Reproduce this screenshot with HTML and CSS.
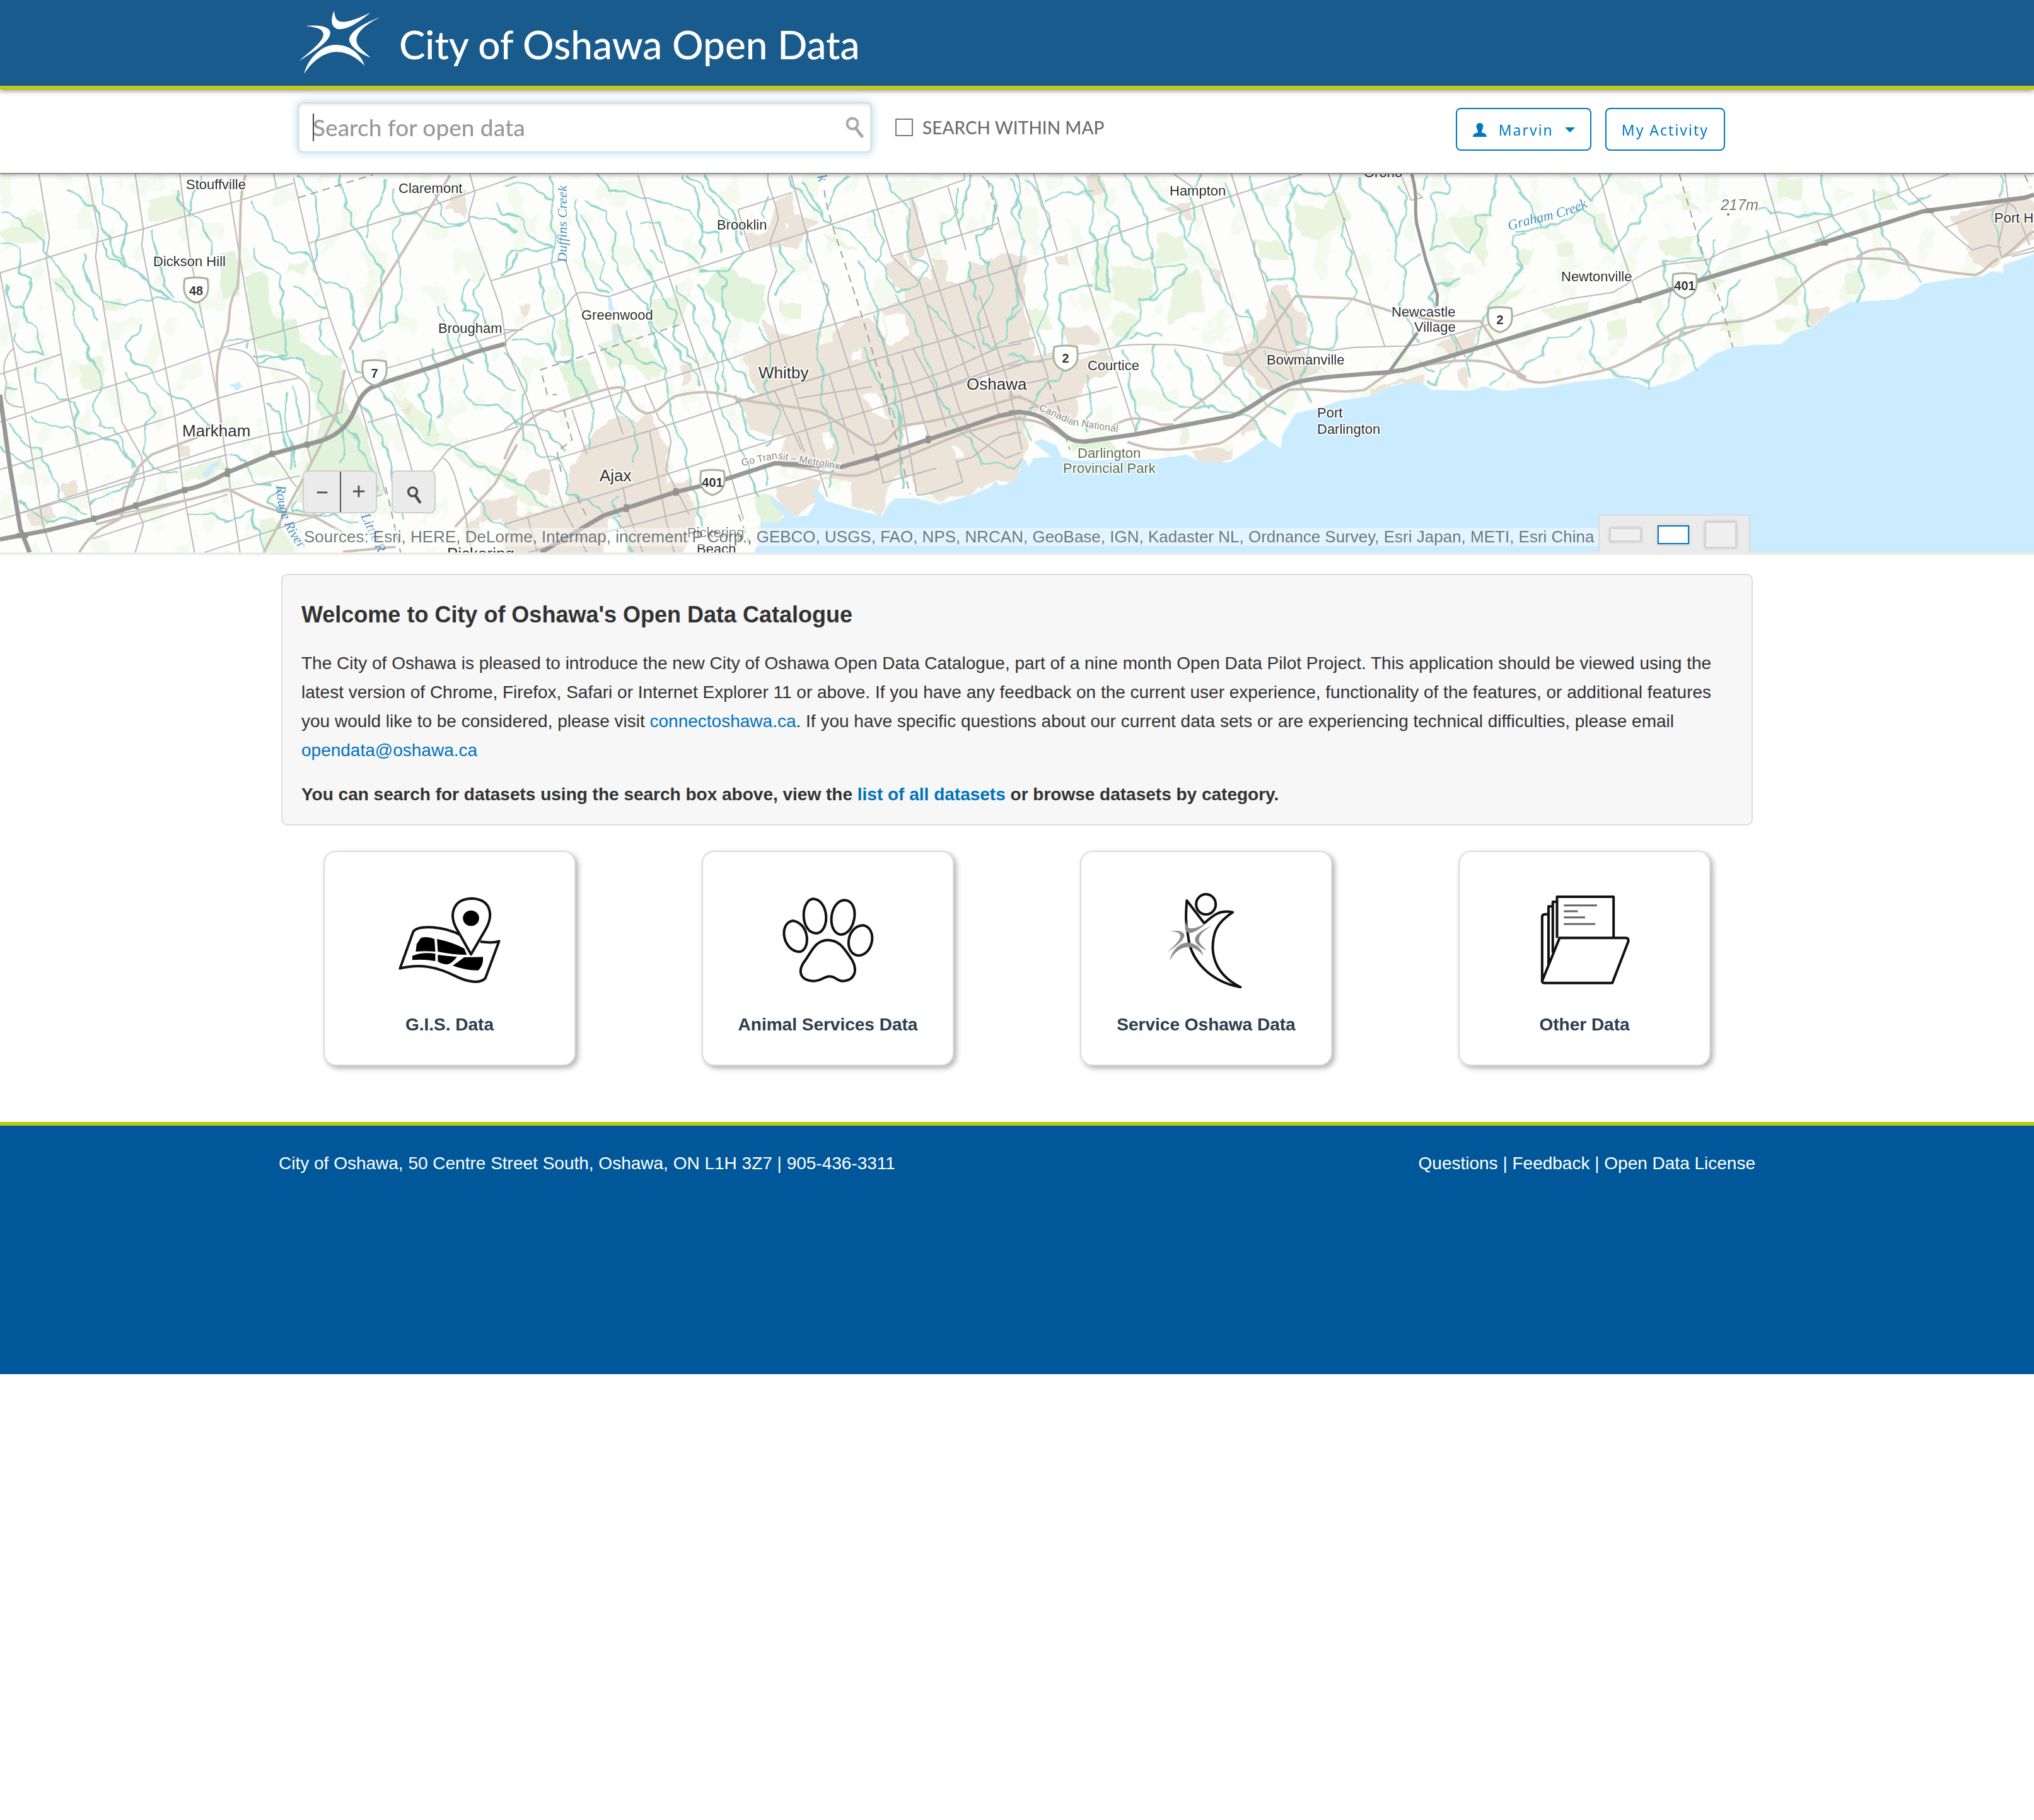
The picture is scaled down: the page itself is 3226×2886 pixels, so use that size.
FILE: index.html
```html
<!DOCTYPE html>
<html lang="en">
<head>
<meta charset="utf-8">
<title>City of Oshawa Open Data</title>
<meta name="viewport" content="width=device-width, initial-scale=1">
<link rel="stylesheet" href="styles.css">
</head>
<body>
<header class="banner">
  <div class="wrap banner-inner">
    <svg class="logo" viewBox="65 50 205 300" preserveAspectRatio="none" aria-hidden="true">
      <g id="star">
        <path d="M152 50C145 90 142 125 162 138C190 140 220 95 243 58C215 85 185 108 168 102C155 95 155 75 152 50Z"/>
        <path d="M82 122C110 118 142 120 143 155C142 200 100 245 65 290C95 240 125 200 126 160C122 130 105 130 82 122Z"/>
        <path d="M268 80C225 110 190 150 190 190C195 230 220 255 243 273C225 240 208 220 208 190C208 150 235 110 268 80Z"/>
        <path d="M78 350C85 290 115 215 155 212C195 212 220 260 228 312C210 275 185 245 158 246C120 250 95 300 78 350Z"/>
      </g>
    </svg>
    <h1 class="site-title">City of Oshawa Open Data</h1>
  </div>
</header>

<div class="toolbar">
  <form class="wrap toolbar-inner" role="search">
    <div class="search-box">
      <input class="search-input" type="text" placeholder="Search for open data" aria-label="Search for open data">
      <span class="caret-bar"></span>
      <button class="search-go" type="button" aria-label="Search">
        <svg viewBox="0 0 30 34" class="glass"><circle cx="11" cy="11" r="8.500"/><path d="M16 18L26 31"/></svg>
      </button>
    </div>
    <label class="within"><input type="checkbox" class="tick">SEARCH WITHIN MAP</label>
    <div class="account">
      <button class="btn" type="button">
        <svg class="person" viewBox="0 0 24 24" aria-hidden="true"><path d="M12 1C7 1 6 5 7 9C8 12 9 13 9 16C6 17 1 18 1 23H23C23 18 18 17 15 16C15 13 16 12 17 9C18 5 17 1 12 1Z"/></svg>
        Marvin
        <span class="down"></span>
      </button>
      <button class="btn" type="button">My Activity</button>
    </div>
  </form>
</div>

<section class="map" aria-label="Map">
  <svg class="map-art" viewBox="0 0 3226 600" preserveAspectRatio="xMidYMid slice">
    <defs>
      <filter id="wobble" x="0" y="0" width="100%" height="100%">
        <feTurbulence type="fractalNoise" baseFrequency="0.035" numOctaves="2" seed="4"/>
        <feDisplacementMap in="SourceGraphic" scale="18" xChannelSelector="R" yChannelSelector="G"/>
      </filter>
      <filter id="woods" x="0" y="0" width="100%" height="100%">
        <feTurbulence type="fractalNoise" baseFrequency="0.026 0.018" numOctaves="4" seed="11"/>
        <feColorMatrix values="0 0 0 0 0.902  0 0 0 0 0.957  0 0 0 0 0.855  14 0 0 0 -8.300"/>
      </filter>
      <filter id="edge" x="-5%" y="-5%" width="110%" height="110%">
        <feTurbulence type="fractalNoise" baseFrequency="0.05" numOctaves="2" seed="8"/>
        <feDisplacementMap in="SourceGraphic" scale="16" xChannelSelector="R" yChannelSelector="G"/>
      </filter>
      <path id="go-line" d="M1177 463L1232 451L1340 470"/>
      <path id="cn-line" d="M1647 374L1700 398L1790 412"/>
      <path id="graham-line" d="M2394 90C2440 72 2480 76 2536 42"/>
      <path id="rouge-line" d="M438 494C440 540 455 580 500 620"/>
      <path id="shield" d="M-18 -18Q0 -22 18 -18C22 4 17 15 0 20C-17 15 -22 4 -18 -18Z"/>
    </defs>
    <rect class="land" width="3226" height="600"/>
    <rect width="3226" height="600" filter="url(#woods)"/>

    <g filter="url(#edge)">
      <g class="area" transform="translate(0 -6) scale(.52296 .39541)">
        <path class="park" d="M665 340L715 315L730 500L675 515ZM740 425L800 400L830 600L895 605L910 690L985 745L1035 750L1045 870L1040 920L1100 1000L1165 1300L890 1340L975 1000L920 760L865 745L780 715L765 660Z"/>
        <path class="wood" d="M445 125L545 90L555 185L455 210ZM75 190L130 170L140 280L10 300L0 250L75 220ZM240 790L310 745L320 870L250 880ZM160 440L205 420L215 470L170 490ZM315 530L370 520L380 560L315 570ZM550 1200L670 1150L690 1200L600 1250L560 1240ZM790 1400L830 1390L900 1533L800 1533ZM1180 880L1290 980L1340 1060L1300 1120ZM1370 1120L1568 1230L1568 1260L1400 1170ZM880 370L930 370L920 420L875 400Z"/>
        <path class="town" d="M1365 110L1410 85L1420 190L1350 150ZM540 1110H578V1145H540ZM185 1255L235 1245V1305L195 1315ZM80 1380L150 1350L170 1400L100 1430ZM1465 1330L1568 1310V1400L1460 1410ZM1400 1440L1460 1380L1450 1480ZM1200 960L1260 945L1240 975Z"/>
        <path class="water" d="M610 1220L640 1180L670 1160L660 1190L620 1225ZM702 868L718 855L735 868L718 885Z"/>
      </g>
      <g class="area" transform="translate(800 -6) scale(.52296 .39541)">
        <path class="town" d="M725 740L800 690L780 600L830 640L870 660L965 640L955 700L990 690L1000 650L1050 590L1110 590L1160 700L1150 590L1140 540L1220 520L1200 490L1170 450L1150 370L1210 340L1240 420L1290 440L1300 360L1340 360L1345 450L1400 440L1410 370L1470 380L1500 330L1580 340V1180L1540 1250L1490 1245L1420 1300L1320 1320L1250 1300L1240 1230L1180 1230L1140 1385L1060 1350L1040 1240L960 1240L940 1330L880 1388L835 1340L830 1270L990 1230L1000 1190L830 1170L850 1060L800 1060L750 1040L715 930L770 900L740 830Z"/>
        <path class="town" d="M825 120L870 90L880 180L960 200L915 240L895 320L840 300L745 320L735 260L800 250ZM270 1050L310 1010L340 990L400 1000L450 970L470 1080L500 1120L490 1260L560 1240L570 1330L590 1400L540 1540H0V1400L190 1340L195 1220L230 1140ZM75 1210L150 1200L130 1300L60 1270ZM1230 110L1250 140L1280 330L1230 390L1215 260ZM540 790L570 770L560 850L540 860ZM50 530L75 530L70 590L52 590ZM330 620L360 625L345 690L325 680Z"/>
        <path class="land" d="M1090 900L1130 880L1160 1000L1120 980ZM1150 590L1220 570L1220 660L1170 700ZM1055 730L1085 720L1080 760L1058 755ZM1200 1040L1270 1010L1280 1080L1210 1110ZM960 1060L990 1050L1000 1110L975 1120ZM1360 1100L1380 1100L1390 1160L1370 1160ZM1440 830L1470 820L1480 860L1450 865ZM320 1400L350 1380L370 1540L300 1540ZM1020 1250L1050 1240L1045 1340L1010 1330ZM850 200L865 210L850 240Z"/>
        <path class="park" d="M600 470L640 400L690 390L740 450L795 470L790 560L770 620L720 590L660 560ZM170 780L250 755L285 880L200 915ZM760 1310L805 1300L850 1380L830 1410L778 1480Z"/>
        <path class="wood" d="M290 700L370 660L440 720L490 800L440 840L390 780L320 800ZM160 600L200 590L210 740L170 740ZM440 520L560 500L540 620L460 640ZM0 1200L60 1260L130 1350L60 1340L0 1270ZM960 250L1010 280L1080 330L1020 310ZM830 520L910 540L900 600L840 580Z"/>
        <path class="water" d="M318 515L330 520L332 580L320 560ZM322 655L342 650L338 695L326 690Z"/>
      </g>
      <g class="area" transform="translate(1600 -6) scale(.52296 .39541)">
        <path class="wood" d="M270 290L300 300L300 470L255 480ZM310 380L430 390L440 480L390 560L320 520ZM450 250L530 270L540 350L450 390ZM500 430L580 400L590 560L480 620ZM740 280L830 290L850 360L760 350ZM860 130L960 150L980 60L1040 180L940 280L870 250ZM1340 190L1450 170L1450 380L1350 260ZM340 560L400 600L360 690L300 640ZM60 560L110 560L130 650L60 640ZM1440 560L1480 490L1568 470L1480 560ZM520 1010L550 1010L545 1090L520 1090ZM1310 420L1370 440L1330 480Z"/>
        <path class="town" d="M0 620L60 610L80 740L140 740L210 760L290 720L320 800L230 850L200 1010L130 1000L60 960L0 980ZM165 640L230 625L280 650L270 700L180 700ZM750 600L780 580L790 470L840 455L870 560L900 590L915 690L870 710L930 770L960 800L800 880L760 870L720 800L650 780V740L740 690ZM550 1140L590 1110L680 1120L670 1172L580 1170ZM1100 880L1260 815V860L1210 850L1150 870L1100 905ZM1290 690L1420 640L1410 710L1330 740ZM230 20L270 15L300 90L250 110ZM460 150L560 120L555 200L520 180ZM610 390L640 400L650 480L625 450ZM140 350L180 340L180 380L150 375ZM0 1180L40 1170L0 1270ZM1360 800L1385 790L1390 870L1370 865ZM700 1030L740 1000L750 1040L710 1070Z"/>
        <path class="park" d="M185 1095L310 1075L325 1120L200 1130Z"/>
      </g>
      <g class="area" transform="translate(2406 -6) scale(.52296 .39541)">
        <path class="wood" d="M430 280L540 260L520 350L450 340ZM230 190L260 170L300 320L260 320ZM70 560L220 520L210 600L110 600ZM480 100L520 90L560 180L510 150ZM790 50L870 30L860 120L790 110ZM780 430L860 430L850 540L790 520ZM1000 420L1040 400L1040 500L1000 500ZM270 600L330 590L330 680L270 680ZM120 300L170 290L170 350L120 350ZM780 590L850 600L830 650L790 640ZM1080 90L1130 80L1150 160L1100 160ZM560 420L640 440L600 500ZM620 600L690 590L680 650L620 650ZM0 320L50 310L40 380L0 380Z"/>
        <path class="town" d="M1310 180L1490 115L1568 120V270L1470 360L1450 400L1400 380L1360 310L1380 320ZM885 560L940 545L950 570L890 630L875 600Z"/>
      </g>
    </g>

    <g class="water">
      <path transform="translate(800 -6) scale(.52296 .39541)" d="M755 1540L780 1470L778 1410L830 1412L850 1385L815 1340L805 1300L840 1340L880 1388L920 1385L945 1330L932 1262L965 1300L975 1325L1050 1355L1145 1388L1165 1340L1185 1315L1250 1315L1320 1340L1420 1300L1470 1275L1490 1245L1500 1265L1540 1255L1575 1180V1540Z"/>
      <path transform="translate(1600 -6) scale(.52296 .39541)" d="M0 1265L40 1200L30 1170L50 1160L60 1190L75 1155L130 1150L75 1090L100 1078L145 1105L160 1150L200 1165L440 1160L540 1140L580 1170L670 1172L720 1130L780 1075L825 1115L830 1060L870 975L935 955L1000 925L1100 905L1150 870L1210 850L1260 860L1280 880L1400 885L1440 865L1490 885L1568 880V1540H0Z"/>
      <path transform="translate(2406 -6) scale(.52296 .39541)" d="M0 875L80 872L170 850L320 830L360 850L400 872L490 840L550 790L600 735L660 710L720 700L800 698L840 655L890 635L950 570L1010 530L1150 517L1200 490L1230 455L1330 435L1410 425L1440 405L1475 412V380L1570 335V1540H0Z"/>
    </g>

    <g filter="url(#wobble)">
      <g class="stream" transform="translate(0 -6) scale(.52296 .39541)">
        <path d="M0 180L50 190L110 260L150 340L210 450L240 510L300 600M210 75L255 140L295 150L305 230L365 360L440 440L520 510L590 580L610 620M0 290L55 310L60 400L95 440L70 540L75 620L110 640L130 740L60 705L40 660"/>
        <path d="M295 20L320 130L360 170L390 250L370 320L380 390M165 450L220 520L230 620L265 710L270 750L320 860L280 940L300 1030L350 1040L400 1190M250 340L265 430L300 520M540 80L550 150L620 210L640 290L635 330M455 240L475 330L500 460L530 500M10 460L40 530L70 550M310 290L340 350L380 390"/>
        <path d="M610 20L580 100L575 190M760 120L800 180L830 270L880 330L930 340L950 370L990 460L1060 470L1080 560L1070 620L1100 680L1170 650M900 20L950 100L965 180L960 290L950 360M775 310L790 370L840 420L855 490L860 600L870 740L820 760L790 770M890 460L940 500L990 550M975 590L970 680L1030 750M1035 20L1050 150L1080 240L1110 320L1160 400L1150 560L1160 640L1200 610L1220 470L1210 330L1190 270L1210 190M1170 30L1160 120L1120 180L1110 280"/>
        <path d="M1190 80L1210 170L1270 170L1330 225L1400 225L1420 200L1500 200L1568 250M1310 70L1330 140L1350 200L1400 220M1510 120L1520 180L1568 205M1568 330L1550 390L1510 410M1420 440L1400 520L1410 570L1440 580L1430 640L1470 730L1480 800L1550 880L1568 890M1320 545L1350 640L1380 740L1440 770M1345 530L1370 570L1390 650L1410 740M1470 420L1440 470L1450 560L1490 640"/>
        <path d="M105 790L110 840L180 910L230 920L225 1030L280 1060L350 1100L410 1190M380 810L400 860L440 900L465 970L440 1020L440 1120L470 1200L540 1220M425 620L380 700L400 760L450 780L480 860L570 940L600 990L640 1030M90 990L130 1020L210 1030L240 1100M30 1010L60 1090L120 1120L150 1200L190 1320L260 1380M690 690L750 690L740 720M770 740L830 750L920 760L930 810L970 850L970 920L1010 990L1080 1070L1110 1160L1150 1280M870 890L860 1000L880 1100L900 1200M810 940L840 960L850 1050L880 1130L890 1210M885 870L900 940L920 1010M450 450L510 510L440 520L380 545L310 525"/>
        <path d="M1060 720L1080 800L1150 870L1190 950L1240 1020L1310 1110L1360 1100L1410 1140L1480 1210L1568 1240M1090 930L1150 1060L1180 1150L1200 1260L1230 1400M1270 760L1300 850L1270 900L1310 980L1300 1060M1310 720L1340 850L1330 1000M1400 770L1410 880L1430 940L1510 940L1568 1030M1020 980L1050 1080L1030 1180M570 1380L640 1370L690 1420L760 1360L780 1460L800 1533M700 1140L740 1160L770 1250L820 1255M0 1110L60 1160L100 1190M60 1320L140 1410L230 1400M840 1260L810 1330L850 1360L850 1420M900 1340L890 1370L1010 1390L1090 1420M1430 1280L1470 1380L1500 1410L1568 1430M270 1330L330 1290L400 1270L420 1200M20 880L55 875"/>
      </g>
      <g class="stream" transform="translate(800 -6) scale(.52296 .39541)">
        <path d="M145 20L145 250L155 430L185 540L190 660L215 760L210 830L250 890L270 960L260 1110M0 60L60 50L120 100L145 130M0 180L60 210L80 260L145 320M0 390L30 320L145 320M215 120L220 200L240 270L230 350L280 470L310 500M250 130L310 170L330 250L330 340L370 460L430 540L460 640L510 700L560 780L590 860M235 180L270 270L300 360L290 430L320 490"/>
        <path d="M280 20L310 80L370 90L430 120L500 130L570 170L600 240L650 250L660 340M365 160L390 250L410 350L460 480L510 560L520 680L560 740L590 770M410 210L470 210L490 300L540 330L590 380M540 20L580 100L600 200L600 360M555 20L600 60L640 150L700 230L720 340L680 390L590 400M610 20L640 100L690 160L720 250M640 390L665 440L660 560L680 610L660 700L700 790L760 890M515 460L570 540L600 660L640 770L650 900L660 1000L700 1060L740 1200L770 1310M590 460L620 540L640 620L660 680L665 820L670 880M805 100L780 180L790 200M830 290L870 400L820 500M440 320L480 370M860 20L880 70L930 140L965 190M910 240L920 320L930 370"/>
        <path d="M900 50L930 100L970 200L1060 260L1130 370L1150 330L1110 150M1040 20L970 150M1160 20L1180 90L1230 160L1220 310L1280 380L1250 470L1190 490L1150 400L1140 340M1380 70L1370 170L1330 210L1340 300M1415 20L1390 180L1380 230M1450 20L1490 100L1480 230L1430 260L1440 340L1470 370L1480 490L1440 560L1450 700L1480 720L1520 680L1530 600L1568 540M1410 360L1420 450L1430 520M1080 370L1100 460L1130 540L1130 620L1160 720L1180 850L1200 1010L1200 1170L1210 1280M1180 500L1240 600L1270 720L1300 840L1330 950L1360 1000L1420 1100L1440 1170L1540 1190L1568 1150M970 440L990 480L970 560L960 640L950 710L970 830L960 920L990 1010L1010 1150L980 1280M770 620L800 690L800 780L790 880L830 960L820 1060L790 1120M1090 700L1120 800L1160 920L1190 1000"/>
        <path d="M105 400L110 490L130 550L150 600L145 700L160 760L210 760M0 730L40 790L70 880L50 980L60 1080L110 1140L180 1170L190 1300L250 1320L300 1370M30 680L130 690L150 740M285 710L350 760L360 880L340 950L400 1030L410 1100L390 1170M340 620L370 700L430 780L490 800L500 960L520 1030L550 1110L550 1190L570 1260L590 1360L600 1430M450 470L440 600L460 720L490 800M0 970L30 1010L80 1030L140 1050L185 1130M0 1230L60 1260L90 1330L140 1350M700 900L720 960L750 1060L790 1080M355 1300L330 1330L350 1390L330 1400L370 1450L385 1533M1290 540L1330 600L1380 680L1430 720M1530 40L1560 100L1568 200M790 1180L790 1260"/>
      </g>
      <g class="stream" transform="translate(1600 -6) scale(.52296 .39541)">
        <path d="M20 20L40 80L10 160L50 280L20 400L30 470L0 600M50 40L100 140L130 210L100 290L120 380L110 560L90 640L110 740M115 130L160 90L250 90M195 20L230 80L250 140L255 270L275 320L260 470L300 480L300 280L330 200L300 140L280 20M345 20L380 90L410 170L420 260L440 350L380 340L340 280L330 210M440 400L530 380L540 400L440 520L400 520L400 600L330 700M430 330L450 470L430 520M0 740L40 740L60 770L100 760"/>
        <path d="M410 20L440 80L520 160L530 260L570 320L620 420L650 500L680 560L730 600L740 680M590 20L550 80L570 200L540 260M730 20L760 120L800 240L860 340L870 440L780 430M655 50L690 150M850 20L860 80L840 150L860 220L860 300L870 480L900 560L920 640L910 700M850 100L880 70L960 110L1000 70L1010 20M735 280L750 340L780 440M800 480L830 570L860 640L870 700L990 710L1000 600L1040 520L1050 480L1030 420L1040 340L1000 260L1010 190M1060 20L1080 90L1140 150L1170 240L1180 350L1200 440L1190 530L1220 640L1240 690M1190 60L1210 150L1170 290"/>
        <path d="M1265 20L1255 80M1330 20L1330 80L1290 100L1290 200L1275 320L1350 290L1400 330L1430 240L1420 185H1465L1480 20M1190 390L1250 340M1370 430L1290 460L1270 510L1300 560M1520 20L1560 120M1568 250L1530 260L1530 300L1560 390L1500 490L1460 540L1440 590L1420 700L1390 760L1400 840M160 490L250 460M160 490L155 600L170 730L160 830L80 890L70 960L40 1010L60 1080M235 820L245 900L240 1050M345 720L370 860L390 1000L385 1040M440 700L430 800L470 900L510 950L600 945L650 975L730 990L780 1075M500 720L550 800L560 890L610 960M600 740L640 830L720 950M690 740L720 830L780 930L840 980M780 720L800 800L850 850M720 560L760 700M910 720L880 860L920 930M1340 660L1360 740L1310 800L1300 870L1270 860M1500 810L1450 860M360 680L400 650L460 660M1250 760L1290 810"/>
      </g>
      <g class="stream" transform="translate(2406 -6) scale(.52296 .39541)">
        <path d="M0 90L50 160L70 240L0 240M70 240L140 200L200 160L240 190L260 290L290 325L340 240L380 200L390 110L440 60V15M175 20L190 70L220 110L240 90L290 20M0 370L20 400L0 430M585 195L550 260L555 340L440 370L450 470L465 480L430 640L455 690L445 770L400 840V870M605 280L580 390L520 500L500 580L510 630L490 690L530 740L545 795M720 160L750 145L780 175L870 180L945 170L930 90L920 20M685 440L640 490L630 550L560 620L500 660M755 240L780 330L850 390L870 480L880 570L890 635M945 170L990 240L1030 280L1040 360L1050 460L1030 525M990 240L930 260L900 290M1080 70L1090 160L1110 270L1160 350L1200 400L1230 455M1135 20L1160 90L1190 140L1250 100M1465 20L1480 60L1460 110M1445 160L1455 290M200 620L160 670L90 675L80 740L0 810M220 600L235 650L220 720L230 770L290 800L310 820L400 840"/>
      </g>
    </g>

    <g class="road" transform="translate(0 -6) scale(.52296 .39541)">
      <path d="M0 412L140 352L290 290L435 235L560 185L735 118L890 52M0 818L185 738M0 1010L210 918L490 800L680 710L1000 590M0 1200L240 1105L530 985L660 915L820 855L910 832M0 1400L440 1230L690 1140M60 1375L440 1210L680 1105L830 1055C900 1050 940 1010 1035 970C1045 930 1035 880 1075 840L1170 795L1568 640M690 715C750 720 760 740 780 785C850 800 920 810 935 880C945 960 935 1000 930 1100L945 1170"/>
      <path d="M118 15L150 270L140 350L205 900L240 1105L280 1400M265 15L298 240L290 350L370 1010L430 1150L438 1240L412 1345L435 1420L410 1533M410 15L435 240L430 300L530 985L555 1280L590 1533M545 15L575 330L660 915L690 1200L728 1533M690 40L725 330L785 800L825 1138M890 30L935 290L1000 590L1090 930L1170 1300M935 293L1270 160L1568 25M1425 15L1440 90C1430 150 1415 180 1425 210L1520 560L1535 695M1490 443L1568 412M1115 1012L1200 978L1250 1205M1568 1030C1450 1080 1390 1090 1360 1120L1300 1220M1345 1155C1380 1180 1390 1290 1410 1370L1430 1533M0 410L75 960L130 1420L158 1533M40 715C10 750 5 800 20 850L15 900C15 940 40 950 70 950M150 1440L690 1285L910 1225M620 1533L1160 1300M280 1478L690 1300M830 15L838 70M825 1138C860 1180 870 1230 900 1270"/>
      <path class="rail" d="M745 20C720 100 735 300 720 470C690 540 700 560 690 650C640 780 660 900 670 1000V1050M1365 20L1150 480L1060 720M1045 800L1020 980L950 1160L800 1533M240 1533C300 1400 370 1420 370 1380C390 1200 430 1180 460 1140L600 1070M290 1420L690 1280C740 1300 780 1370 940 1385C980 1400 1000 1430 1040 1450M1568 1100L1500 1260L1380 1430M1040 1530L1200 1510"/>
      <path class="dash" d="M905 110L1130 18M1170 1270L1215 1533"/>
      <path class="hwy" d="M0 900L30 1190L62 1440L90 1533M0 1480L60 1465L140 1445L285 1398L412 1345L560 1282C620 1265 650 1240 690 1212L825 1138L930 1100C1000 1080 1040 1050 1065 990C1085 940 1090 900 1125 872L1180 845L1345 775L1440 730L1535 695"/>
      <path class="hwy-node" d="M50 1465H85M285 1385V1410M412 1332V1358M560 1270V1295M690 1195V1230M825 1125V1150M932 1088V1112"/>
    </g>
    <g class="road" transform="translate(800 -6) scale(.52296 .39541)">
      <path d="M0 42L30 25M0 428L185 355M0 640L55 640M0 695C60 600 120 600 170 570C200 540 200 500 230 490C270 485 290 510 320 505C400 470 480 430 600 385L820 290L1240 110L1395 38V15M0 1040C60 980 80 960 130 960L160 970L420 865L700 750L830 685L1120 570L1360 465L1568 380M135 1165L440 1045L820 885L1120 760L1360 670L1470 625M0 1420L360 1275L820 1080L1140 950L1568 780M70 1533L700 1315L1000 1205M890 915L1000 890L1115 868M1140 880L1240 850L1350 800L1500 710L1568 695M1175 345L1500 212M708 158L870 90M1145 1255L1310 1195M1140 950L1330 870L1568 760M700 930L880 860L980 820M1370 1170L1420 1150L1500 1070L1568 1050M1400 1040L1520 1155L1568 1130M1250 1300C1270 1310 1350 1270 1390 1250L1370 1160"/>
      <path d="M405 20L500 430L585 770L660 1100L725 1400M185 360L220 500L275 720L325 920L360 1060M0 700L65 900L140 1180L180 1360L250 1533M870 20L915 250L1000 600L1060 850L1130 1140L1150 1255M800 15C790 60 830 130 830 200L805 290L825 400C820 440 795 480 800 530L860 800L930 1110L980 1310M1100 20L1175 345L1260 450L1330 750L1380 960L1420 1060M1235 110L1300 400L1380 720L1420 880M1345 65L1400 320M708 158L745 320M1500 215L1568 520M1380 460L1470 830L1500 980M1120 580L1200 900L1250 1290M205 960L250 1140M425 865L470 1000C490 1020 500 1040 505 1090L490 1200L560 1380M440 1045L490 1400L515 1533M1205 740L1290 1080M1240 715L1300 860L1340 1030M1440 500L1540 900M890 1060L910 1130M985 820L1060 1140M360 1270L370 1350L420 1533M70 1390L100 1533M820 885L900 1120"/>
      <path class="rail" d="M0 1160C30 1050 60 1000 130 960C200 930 300 870 350 870C390 880 370 950 430 975C480 970 480 930 520 905C600 880 640 885 720 920C800 940 900 950 960 970C1000 1000 1050 1050 1110 1100C1180 1110 1170 1020 1230 1020C1350 1000 1450 950 1568 905M840 1185C940 1190 980 1225 1060 1225C1120 1220 1150 1180 1400 1050L1568 990"/>
      <path class="dash" d="M970 80C980 200 1050 420 1110 700L1140 830L1190 1080L1230 1300M1465 40L1500 210M530 620L110 800L130 900H160M180 960L205 1080L160 1130L175 1230M220 1310L250 1390M710 1380L745 1500"/>
      <path class="hwy" d="M110 1533L300 1385L370 1355L520 1290L640 1252L820 1175L1020 1190L1130 1150L1285 1080L1400 1030L1500 985L1568 968"/>
      <path class="hwy-node" d="M370 1340V1370M520 1275V1305M1130 1138V1165M1285 1065V1095"/>
    </g>
    <g class="road" transform="translate(1600 -6) scale(.52296 .39541)">
      <path d="M0 392L205 308L585 140L890 15M75 15L148 325M0 340L120 835M205 308L385 1050M585 140L720 720C740 800 780 810 800 880M675 15L870 860M970 15L1140 705M500 15L560 70M0 695L80 670M0 785L215 735L310 715C330 700 400 695 500 700C600 710 640 745 700 740C740 720 760 705 780 710L850 730L910 710L980 722L1050 710L1200 705L1240 700L1450 620L1568 570M60 955L170 920L330 868M0 870L120 835M1350 660L1385 750M0 870L40 1120M0 1060L20 1050M1190 20L1220 120L1255 110L1240 90"/>
      <path class="rail" d="M500 1005L620 890L770 690L870 505L1040 515L1170 570L1300 605H1430L1530 800L1568 830M0 905C60 910 80 940 120 980M300 1040C350 990 390 980 460 1020H500M360 1090C450 1130 480 1130 640 1095C700 1060 760 960 850 880C950 870 1000 900 1080 880L1150 815C1250 780 1400 740 1480 780L1568 835M0 1000C80 990 120 1020 180 1080"/>
      <path class="dash" d="M120 850L155 970M170 1060L185 1120"/>
      <path class="hwy" d="M0 972L30 970C100 975 120 1010 150 1040C180 1080 200 1088 230 1088L380 1060L680 985C760 940 770 900 860 855C920 830 1000 825 1150 810L1200 800L1568 655"/>
      <path class="hwy thin" d="M1222 15C1245 120 1225 160 1240 230L1265 360L1300 500L1298 545M1240 650L1150 815"/>
    </g>
    <g class="road" transform="translate(2406 -6) scale(.52296 .39541)">
      <path d="M0 580L160 515L290 490C360 440 390 400 450 378L580 358C620 330 630 320 660 310L910 205L1170 85L1310 15M250 15L300 260L345 430L368 520M750 15L800 245M1170 15L1190 80L1300 230L1380 320L1430 300L1470 310M910 200L935 290M1480 15L1490 120L1460 300L1470 350L1568 310M1300 230L1490 130L1510 150L1555 300M1500 345L1568 325"/>
      <path class="rail" d="M0 825C60 870 100 850 200 820C350 790 400 700 500 635C600 610 680 610 700 600C800 560 830 490 900 420C980 350 1020 350 1100 355C1200 380 1280 410 1390 420C1430 400 1430 370 1460 355M1030 350C1060 320 1100 310 1140 318C1170 330 1180 360 1190 380M380 730L540 640M1470 350C1520 310 1540 260 1568 245"/>
      <path class="dash" d="M492 15L560 320L620 540L655 712M1540 20L1558 70"/>
      <path class="hwy" d="M0 665L370 520L550 443L930 290L1230 165L1300 152L1540 110L1568 98"/>
      <path class="hwy-node" d="M358 522H378M922 292H943M1242 162H1263"/>
    </g>

    <g class="shields">
      <use href="#shield" x="311" y="184"/><use href="#shield" x="594" y="315"/><use href="#shield" x="1130" y="489"/><use href="#shield" x="1690" y="292"/><use href="#shield" x="2379" y="231"/><use href="#shield" x="2672" y="177"/>
      <text x="311" y="192">48</text><text x="594" y="323">7</text><text x="1130" y="496">401</text><text x="1690" y="299">2</text><text x="2379" y="238">2</text><text x="2672" y="184">401</text>
    </g>
    <g class="place">
      <text x="295" y="24">Stouffville</text><text x="632" y="30">Claremont</text><text x="243" y="146">Dickson Hill</text><text x="695" y="252">Brougham</text>
      <text x="1137" y="88">Brooklin</text><text x="922" y="231">Greenwood</text><text x="1855" y="34">Hampton</text><text x="2163" y="5">Orono</text>
      <text x="1725" y="311">Courtice</text><text x="2009" y="302">Bowmanville</text><text x="2207" y="226">Newcastle</text><text x="2243" y="250">Village</text>
      <text x="2089" y="386">Port</text><text x="2089" y="412">Darlington</text><text x="2476" y="170">Newtonville</text><text x="3163" y="77">Port Hope</text>
      <text x="1090" y="576">Pickering</text><text x="1105" y="602">Beach</text>
    </g>
    <g class="place city">
      <text x="289" y="416">Markham</text><text x="1203" y="324">Whitby</text><text x="1533" y="342">Oshawa</text><text x="951" y="487">Ajax</text><text x="709" y="611">Pickering</text>
    </g>
    <g class="place park-name"><text x="1709" y="450">Darlington</text><text x="1686" y="474">Provincial Park</text></g>
    <g class="creek">
      <text transform="translate(899 140) rotate(-90)">Duffins Creek</text>
      <text><textPath href="#graham-line">Graham Creek</textPath></text>
      <text><textPath href="#rouge-line">Rouge River</textPath></text>
      <text transform="translate(572 542) rotate(65)">Little R</text>
      <text transform="translate(1296 4) rotate(70)">k</text>
    </g>
    <g class="line-name">
      <text><textPath href="#go-line">Go Transit – Metrolinx</textPath></text>
      <text><textPath href="#cn-line">Canadian National</textPath></text>
    </g>
    <text class="height" x="2729" y="57">217m</text><circle cx="2741" cy="64" r="2" fill="#777"/>
  </svg>

  <div class="wrap map-ui">
    <div class="map-buttons">
      <div class="zoom">
        <button type="button" aria-label="Zoom out"><svg viewBox="0 0 24 24"><path d="M3 13H21"/></svg></button>
        <button type="button" aria-label="Zoom in"><svg viewBox="0 0 24 24"><path d="M2 11H22M12 1V21"/></svg></button>
      </div>
      <button class="locate" type="button" aria-label="Find a place"><svg viewBox="0 0 30 34" class="glass dark"><circle cx="11" cy="11" r="8"/><path d="M16 18L24 30"/></svg></button>
    </div>
    <div class="credit-row">
      <p class="credit">Sources: Esri, HERE, DeLorme, Intermap, increment P Corp., GEBCO, USGS, FAO, NPS, NRCAN, GeoBase, IGN, Kadaster NL, Ordnance Survey, Esri Japan, METI, Esri China (Hong Kong), swisstopo</p>
      <div class="sizes">
        <button class="size small" type="button" aria-label="Small map"></button>
        <button class="size medium" type="button" aria-label="Medium map"></button>
        <button class="size large" type="button" aria-label="Large map"></button>
      </div>
    </div>
  </div>
</section>

<main>
  <section class="wrap welcome">
    <h2>Welcome to City of Oshawa's Open Data Catalogue</h2>
    <p>The City of Oshawa is pleased to introduce the new City of Oshawa Open Data Catalogue, part of a nine month Open Data Pilot Project. This application should be viewed using the latest version of Chrome, Firefox, Safari or Internet Explorer 11 or above. If you have any feedback on the current user experience, functionality of the features, or additional features you would like to be considered, please visit <a href="#connect">connectoshawa.ca</a>. If you have specific questions about our current data sets or are experiencing technical difficulties, please email <a href="#email">opendata@oshawa.ca</a></p>
    <p class="strong">You can search for datasets using the search box above, view the <a href="#datasets">list of all datasets</a> or browse datasets by category.</p>
  </section>

  <nav class="cards" aria-label="Categories">
    <a class="card" href="#gis">
      <svg class="pic" viewBox="197 250 261 480" preserveAspectRatio="none" aria-hidden="true">
        <path class="ink" d="M352 455C315 415 255 405 242 440L211 615C260 590 300 610 340 650C370 680 400 690 412 660L444 485C435 492 420 493 400 488"/>
        <path class="ink" d="M378 548L345 430C325 360 335 285 379 282C425 285 432 360 412 430Z"/>
        <ellipse cx="378" cy="376" rx="19" ry="37"/>
        <path d="M260 470Q275 460 292 475L294 535Q270 530 248 535L250 500ZM298 475Q335 490 362 520L368 550Q335 550 300 535ZM240 555Q265 535 294 545V580Q265 570 240 575ZM300 550Q320 555 345 560Q330 600 318 595Q305 590 300 582ZM362 562L406 560Q408 600 395 624Q365 625 335 602Z"/>
      </svg>
      <span>G.I.S. Data</span>
    </a>
    <a class="card" href="#animals">
      <svg class="pic" viewBox="1084 250 261 480" preserveAspectRatio="none" aria-hidden="true">
        <path class="ink" d="M1180 284C1150 290 1148 445 1188 448C1220 440 1218 290 1180 284ZM1254 290C1216 295 1212 450 1246 454C1280 450 1292 295 1254 290ZM1132 388C1098 400 1108 530 1147 536C1175 530 1172 400 1132 388ZM1297 410C1256 415 1252 550 1287 554C1322 550 1332 420 1297 410ZM1214 480C1185 480 1175 540 1160 580C1145 620 1145 670 1180 675C1200 675 1205 652 1220 653C1235 655 1235 675 1250 675C1280 670 1285 620 1270 570C1255 530 1245 480 1214 480Z"/>
      </svg>
      <span>Animal Services Data</span>
    </a>
    <a class="card" href="#service">
      <svg class="pic" viewBox="197 250 261 480" preserveAspectRatio="none" aria-hidden="true">
        <ellipse class="ink" cx="327" cy="310" rx="23" ry="48"/>
        <path class="ink" d="M282 292L323 400C345 360 360 335 390 348C350 400 343 450 343 520C345 600 365 660 408 704C340 680 290 580 285 460C278 400 280 350 282 292Z"/>
        <use href="#star" fill="#8c8c8c" transform="translate(200 361) scale(.532 .62)"/>
      </svg>
      <span>Service Oshawa Data</span>
    </a>
    <a class="card" href="#other">
      <svg class="pic" viewBox="1084 250 261 480" preserveAspectRatio="none" aria-hidden="true">
        <path class="ink" d="M1150 470V274H1283V465M1150 298H1140V540M1140 320H1130V600M1130 357H1122Q1115 358 1115 370V680M1156 470H1312Q1318 470 1318 485L1280 684H1120Q1114 685 1116 670Z"/>
        <path class="ink gray" d="M1166 315H1244M1166 343H1199M1166 372H1216M1166 404H1240"/>
      </svg>
      <span>Other Data</span>
    </a>
  </nav>
</main>

<footer class="foot">
  <div class="foot-inner">
    <p>City of Oshawa, 50 Centre Street South, Oshawa, ON L1H 3Z7 | 905-436-3311</p>
    <p><a href="#questions">Questions</a> | <a href="#feedback">Feedback</a> | <a href="#license">Open Data License</a></p>
  </div>
</footer>
</body>
</html>
```

FILE: styles.css
```css
* { box-sizing: border-box; }

body {
  margin: 0;
  background: #fff;
  color: #323232;
  font: 28px/46px "Liberation Sans", Arial, sans-serif;
}

h1, h2, p { margin: 0; }
a { color: #0072bc; text-decoration: none; }
button { font: inherit; cursor: pointer; padding: 0; }

.wrap {
  width: 100%;
  max-width: 2334px;
  margin: 0 auto;
}

/* banner */
.banner {
  background: #1a5b8e;
  border-bottom: 6px solid #bfc912;
  position: relative;
  z-index: 3;
  box-shadow: 0 2px 8px rgba(0, 0, 0, .45);
}
.banner-inner {
  display: flex;
  align-items: center;
  gap: 28px;
  padding: 17px 28px 19px;
}
.logo { width: 131px; height: 100px; fill: #fff; }
.site-title {
  padding-top: 6px;
  color: #fff;
  font: 500 62px/80px Lato, sans-serif;
}

/* toolbar */
.toolbar {
  background: #fff;
  border-bottom: 2px solid #969696;
  position: relative;
  z-index: 2;
  box-shadow: 0 2px 6px rgba(0, 0, 0, .3);
}
.toolbar-inner {
  display: flex;
  align-items: center;
  padding: 20px 44px 32px 26px;
}
.search-box {
  position: relative;
  display: flex;
  align-items: center;
  width: 911px;
  border: 2px solid #dcdcdc;
  border-radius: 8px;
  background: #fff;
  box-shadow: 0 0 14px rgba(120, 190, 245, .6), inset 0 2px 4px rgba(0, 0, 0, .12);
}
.search-input {
  flex: 1;
  min-width: 0;
  border: 0;
  outline: 0;
  background: none;
  padding: 16px 22px;
  font: 500 37px/44px Lato, sans-serif;
  color: #555;
}
.search-input::placeholder { color: #999; opacity: 1; }
.caret-bar {
  position: absolute;
  left: 22px;
  top: 16px;
  width: 2px;
  height: 44px;
  background: #444;
}
.search-go { border: 0; background: none; margin-right: 10px; display: flex; }
.glass { width: 30px; height: 34px; fill: none; stroke: #aaa; stroke-width: 4; }
.glass path { stroke-width: 5; stroke-linecap: round; }
.glass.dark { stroke: #4c4c4c; }

.within {
  display: flex;
  align-items: center;
  gap: 15px;
  margin-left: 37px;
  font: 500 28px/40px Lato, sans-serif;
  color: #6e6e6e;
}
.tick {
  appearance: none;
  width: 28px;
  height: 28px;
  margin: 0;
  border: 2px solid #7a7a7a;
  background: #fff;
}
.account {
  display: flex;
  gap: 22px;
  margin-left: auto;
  padding-top: 6px;
}
.btn {
  display: flex;
  align-items: center;
  height: 68px;
  padding: 2px 24px 0;
  border: 2px solid #0079c1;
  border-radius: 8px;
  background: #fff;
  color: #0079c1;
  font: 23px/32px "Noto Sans", sans-serif;
  letter-spacing: 2px;
}
.person { width: 24px; height: 24px; fill: #0079c1; margin-right: 18px; }
.down {
  margin-left: 18px;
  border: 8px solid transparent;
  border-top-color: #0079c1;
  border-bottom: 0;
}

/* map */
.map { position: relative; border-bottom: 4px solid #ebebeb; }
.map-art { display: block; width: 100%; height: 600px; }
.land { fill: #fdfdfc; }
.water { fill: #cbebff; }
.park { fill: #e1f3da; }
.wood { fill: #eaf5df; }
.town { fill: #ece4d8; }
.stream path, .road path { fill: none; vector-effect: non-scaling-stroke; stroke-linejoin: round; }
.stream path { stroke: #98d8cb; stroke-width: 3px; }
.road path { stroke: #bcb8bc; stroke-width: 2px; }
.road .rail { stroke: #cbc1b7; stroke-width: 4px; }
.road .dash { stroke: #a5a2a2; stroke-dasharray: 12 8; }
.road .hwy { stroke: #989898; stroke-width: 7px; }
.road .thin { stroke-width: 5px; }
.road .hwy-node { stroke: #929292; stroke-width: 8px; }
.shields use { fill: #fff; stroke: #a5b59a; stroke-width: 3px; }
.shields text { font: bold 20px "Liberation Sans", Arial, sans-serif; text-anchor: middle; fill: #333; }
.place text, .line-name text, .height {
  font: 22px "Liberation Sans", Arial, sans-serif;
  fill: #2e2e2e;
  stroke: #fff;
  stroke-width: 4px;
  stroke-opacity: .8;
  paint-order: stroke;
}
.city text { font-size: 26px; }
.park-name text { fill: #5d6e50; }
.line-name text { font-size: 16px; fill: #8a8480; }
.height { font-style: italic; font-size: 24px; fill: #777; }
.creek text { font: italic 22px "Liberation Serif", serif; fill: #4a90bf; }

.map-ui {
  position: absolute;
  left: 0;
  right: 0;
  bottom: 0;
}
.map-buttons { display: flex; gap: 23px; padding-left: 34px; }
.zoom, .locate {
  display: flex;
  height: 68px;
  border: 2px solid #cfcfcf;
  border-radius: 8px;
  background: #ebebeb;
}
.zoom button {
  display: flex;
  align-items: center;
  justify-content: center;
  width: 57px;
  border: 0;
  background: none;
}
.zoom button + button { border-left: 2px solid #555; }
.zoom svg { width: 22px; height: 22px; stroke: #4c4c4c; stroke-width: 3; }
.locate { width: 70px; align-items: center; justify-content: center; padding: 10px 0 0 4px; }
.locate .glass { width: 26px; height: 30px; }
.credit-row { display: flex; align-items: flex-end; padding: 2px 4px 0 32px; }
.credit {
  flex: 1;
  min-width: 0;
  overflow: hidden;
  white-space: nowrap;
  margin-bottom: 10px;
  padding-left: 4px;
  background: rgba(255, 255, 255, .45);
  color: rgba(70, 76, 80, .75);
  font-size: 26px;
  line-height: 29px;
}
.sizes {
  display: flex;
  align-items: center;
  justify-content: space-between;
  width: 241px;
  height: 60px;
  padding: 2px 20px 0 16px;
  border: 2px solid #dadada;
  border-bottom: 0;
  background: #ebebeb;
}
.size {
  width: 50px;
  border: 2px solid #d4d4d4;
  background: #efefef;
  box-shadow: 0 0 4px rgba(0, 0, 0, .25);
}
.small { height: 22px; }
.medium { height: 30px; border-color: #0079c1; background: #fff; }
.large { height: 42px; }

/* welcome panel */
.welcome {
  margin-top: 30px;
  padding: 40px 30px 24px;
  border: 2px solid #dcdcdc;
  border-radius: 10px;
  background: #f7f7f7;
}
.welcome h2 { font-size: 36px; line-height: 46px; margin-bottom: 31px; }
.welcome .strong { font-weight: bold; margin-top: 24px; }

/* category cards */
.cards {
  display: grid;
  grid-template-columns: repeat(4, 1fr);
  justify-items: center;
  max-width: 2400px;
  margin: 40px auto 89px;
}
.card {
  display: flex;
  flex-direction: column;
  align-items: center;
  gap: 28px;
  width: 400px;
  height: 341px;
  padding-top: 63px;
  border: 2px solid #dcdcdc;
  border-radius: 20px;
  background: #fff;
  box-shadow: 4px 4px 8px rgba(0, 0, 0, .3);
  color: #2c3e50;
  font-weight: bold;
}
.pic { width: 176px; height: 160px; }
.ink { fill: #fff; stroke: #111; stroke-width: 4px; vector-effect: non-scaling-stroke; stroke-linejoin: round; }
.gray { stroke: #666; stroke-width: 3px; }

/* footer */
.foot {
  border-top: 6px solid #bfc912;
  background: #005799;
  color: #fff;
}
.foot a { color: #fff; }
.foot-inner {
  display: flex;
  justify-content: space-between;
  width: 100%;
  max-width: 2342px;
  min-height: 394px;
  margin: 0 auto;
  padding-top: 37px;
}
```
